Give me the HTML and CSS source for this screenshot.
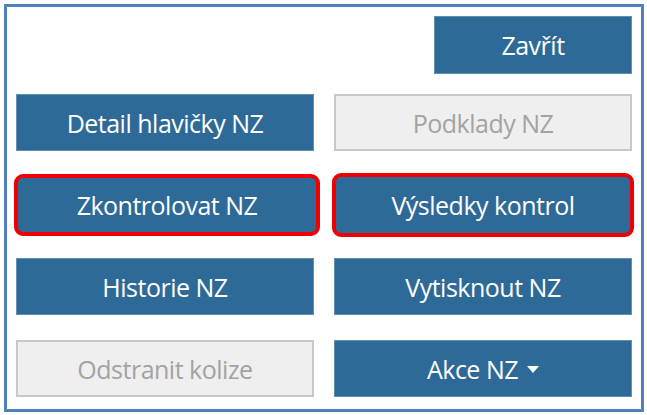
FILE: index.html
```html
<!DOCTYPE html>
<html lang="cs">
<head>
    <meta charset="UTF-8">
    <meta name="viewport" content="width=device-width, initial-scale=1.0">
    <title>Akce NZ</title>
    <link rel="stylesheet" href="styles.css">
</head>
<body>

    <div class="panel">
        <div class="top-row">
            <button type="button" class="btn">Zavřít</button>
        </div>
        <div class="btn-grid">
            <button type="button" class="btn">Detail hlavičky NZ</button>
            <button type="button" class="btn" disabled>Podklady NZ</button>

            <button type="button" class="btn marked marked-left">Zkontrolovat NZ</button>
            <button type="button" class="btn marked marked-right">Výsledky kontrol</button>

            <button type="button" class="btn">Historie NZ</button>
            <button type="button" class="btn">Vytisknout NZ</button>

            <button type="button" class="btn" disabled>Odstranit kolize</button>
            <button type="button" class="btn">Akce NZ <span class="caret"></span></button>
        </div>
    </div>

</body>
</html>
```

FILE: styles.css
```css
body {
    margin: 0;
    padding: 4px;
    background: #ffffff;
    font-family: "Open Sans", "Noto Sans", Arial, sans-serif;
}

.panel {
    width: 640px;
    height: 408px;
    box-sizing: border-box;
    border: 3px solid #4f81bd;
    padding: 9px 9px 0 9px;
}

.top-row {
    display: flex;
    justify-content: flex-end;
    margin-bottom: 20px;
}

.top-row .btn {
    width: 198px;
    height: 58px;
}

.btn-grid {
    display: grid;
    grid-template-columns: 298px 298px;
    grid-auto-rows: 57px;
    column-gap: 20px;
    row-gap: 25px;
}

.btn {
    font-family: inherit;
    font-size: 25px;
    color: #ffffff;
    background: #2e6a98;
    border: 1px solid #5e8fb5;
    padding: 0;
    cursor: pointer;
    display: flex;
    align-items: center;
    justify-content: center;
    gap: 9px;
    letter-spacing: -0.5px;
}

.btn:hover {
    background: #285f89;
}

.btn:disabled {
    background: #efefef;
    border: 2px solid #c8c8c8;
    color: #a3a3a3;
    cursor: default;
}

/* red annotation boxes */
.marked {
    border: 4px solid #f00000;
    border-radius: 9px;
}

.marked-left {
    margin: -2px -6px -3px -2px;
}

.marked-right {
    margin: -3px -2px -4px -2px;
}

.caret {
    width: 0;
    height: 0;
    border-left: 6px solid transparent;
    border-right: 6px solid transparent;
    border-top: 7px solid #ffffff;
    margin-top: 2px;
}
```
